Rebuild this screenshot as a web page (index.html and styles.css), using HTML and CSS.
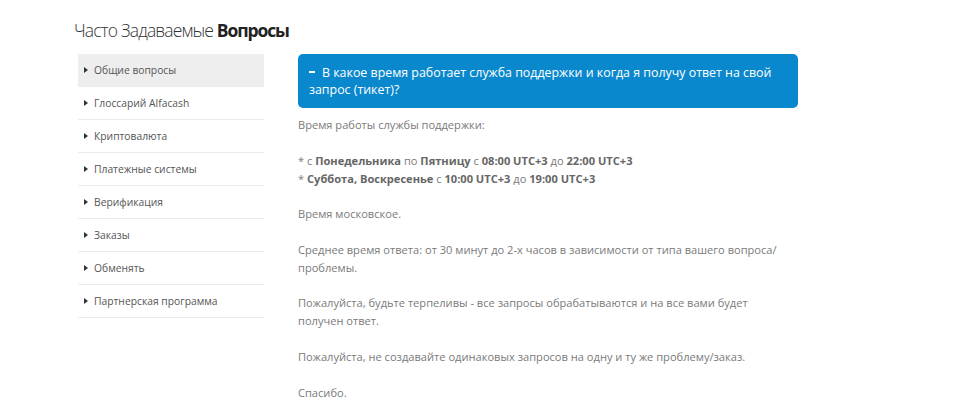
FILE: index.html
```html
<!DOCTYPE html>
<html lang="ru">
<head>
<meta charset="utf-8">
<title>Часто Задаваемые Вопросы</title>
<link rel="stylesheet" href="styles.css">
</head>
<body>
<div class="page">
  <h1 class="title">Часто Задаваемые <b>Вопросы</b></h1>
  <div class="layout">
    <ul class="side">
      <li class="item active"><span class="tri"></span>Общие вопросы</li>
      <li class="item"><span class="tri"></span>Глоссарий Alfacash</li>
      <li class="item"><span class="tri"></span>Криптовалюта</li>
      <li class="item"><span class="tri"></span>Платежные системы</li>
      <li class="item"><span class="tri"></span>Верификация</li>
      <li class="item"><span class="tri"></span>Заказы</li>
      <li class="item"><span class="tri"></span>Обменять</li>
      <li class="item"><span class="tri"></span>Партнерская программа</li>
    </ul>
    <div class="content">
      <div class="question"><span class="minus"></span>В какое время работает служба поддержки и когда я получу ответ на свой запрос (тикет)?</div>
      <div class="answer">
        <p>Время работы службы поддержки:</p>
        <p>* с <b>Понедельника</b> по <b>Пятницу</b> с <b>08:00 UTC+3</b> до <b>22:00 UTC+3</b><br>* <b>Суббота, Воскресенье</b> с <b>10:00 UTC+3</b> до <b>19:00 UTC+3</b></p>
        <p>Время московское.</p>
        <p>Среднее время ответа: от 30 минут до 2-х часов в зависимости от типа вашего вопроса/проблемы.</p>
        <p>Пожалуйста, будьте терпеливы - все запросы обрабатываются и на все вами будет получен ответ.</p>
        <p>Пожалуйста, не создавайте одинаковых запросов на одну и ту же проблему/заказ.</p>
        <p>Спасибо.</p>
      </div>
    </div>
  </div>
</div>
</body>
</html>
```

FILE: styles.css
```css
html, body {
  margin: 0;
  padding: 0;
  background: #fff;
}
body {
  font-family: "Open Sans", "Noto Sans", sans-serif;
  color: #7a7a7a;
}
.page {
  padding: 18px 0 0 74px;
}
.title {
  margin: 0;
  font-size: 17.5px;
  line-height: 24px;
  font-weight: 300;
  letter-spacing: -0.85px;
  color: #333;
}
.title b {
  font-weight: 700;
  color: #222;
  letter-spacing: -1.1px;
}
.layout {
  display: flex;
  margin-top: 12px;
  margin-left: 4px;
  gap: 34px;
}
.side {
  list-style: none;
  margin: 0;
  padding: 0;
  width: 186px;
  flex: none;
}
.item {
  display: flex;
  align-items: center;
  height: 32px;
  border-bottom: 1px solid #ebebeb;
  font-size: 10.3px;
  color: #555;
  padding-left: 6px;
}
.item.active {
  background: #eeeeee;
}
.tri {
  width: 0;
  height: 0;
  border-top: 3px solid transparent;
  border-bottom: 3px solid transparent;
  border-left: 4px solid #333;
  margin-right: 6px;
}
.content {
  width: 500px;
}
.question {
  background: #0a88cd;
  color: #fff;
  border-radius: 5px;
  padding: 10px 10px 10px 11px;
  font-size: 12.4px;
  line-height: 17px;
}
.minus {
  display: inline-block;
  width: 6px;
  height: 2px;
  background: #fff;
  vertical-align: middle;
  margin: 0 7px 3px 0;
}
.answer {
  margin-top: 8px;
  padding-right: 7px;
  font-size: 11.1px;
  line-height: 18px;
}
.answer p {
  margin: 0 0 17.6px;
}
.answer b {
  color: #666;
  font-weight: 700;
}
```
